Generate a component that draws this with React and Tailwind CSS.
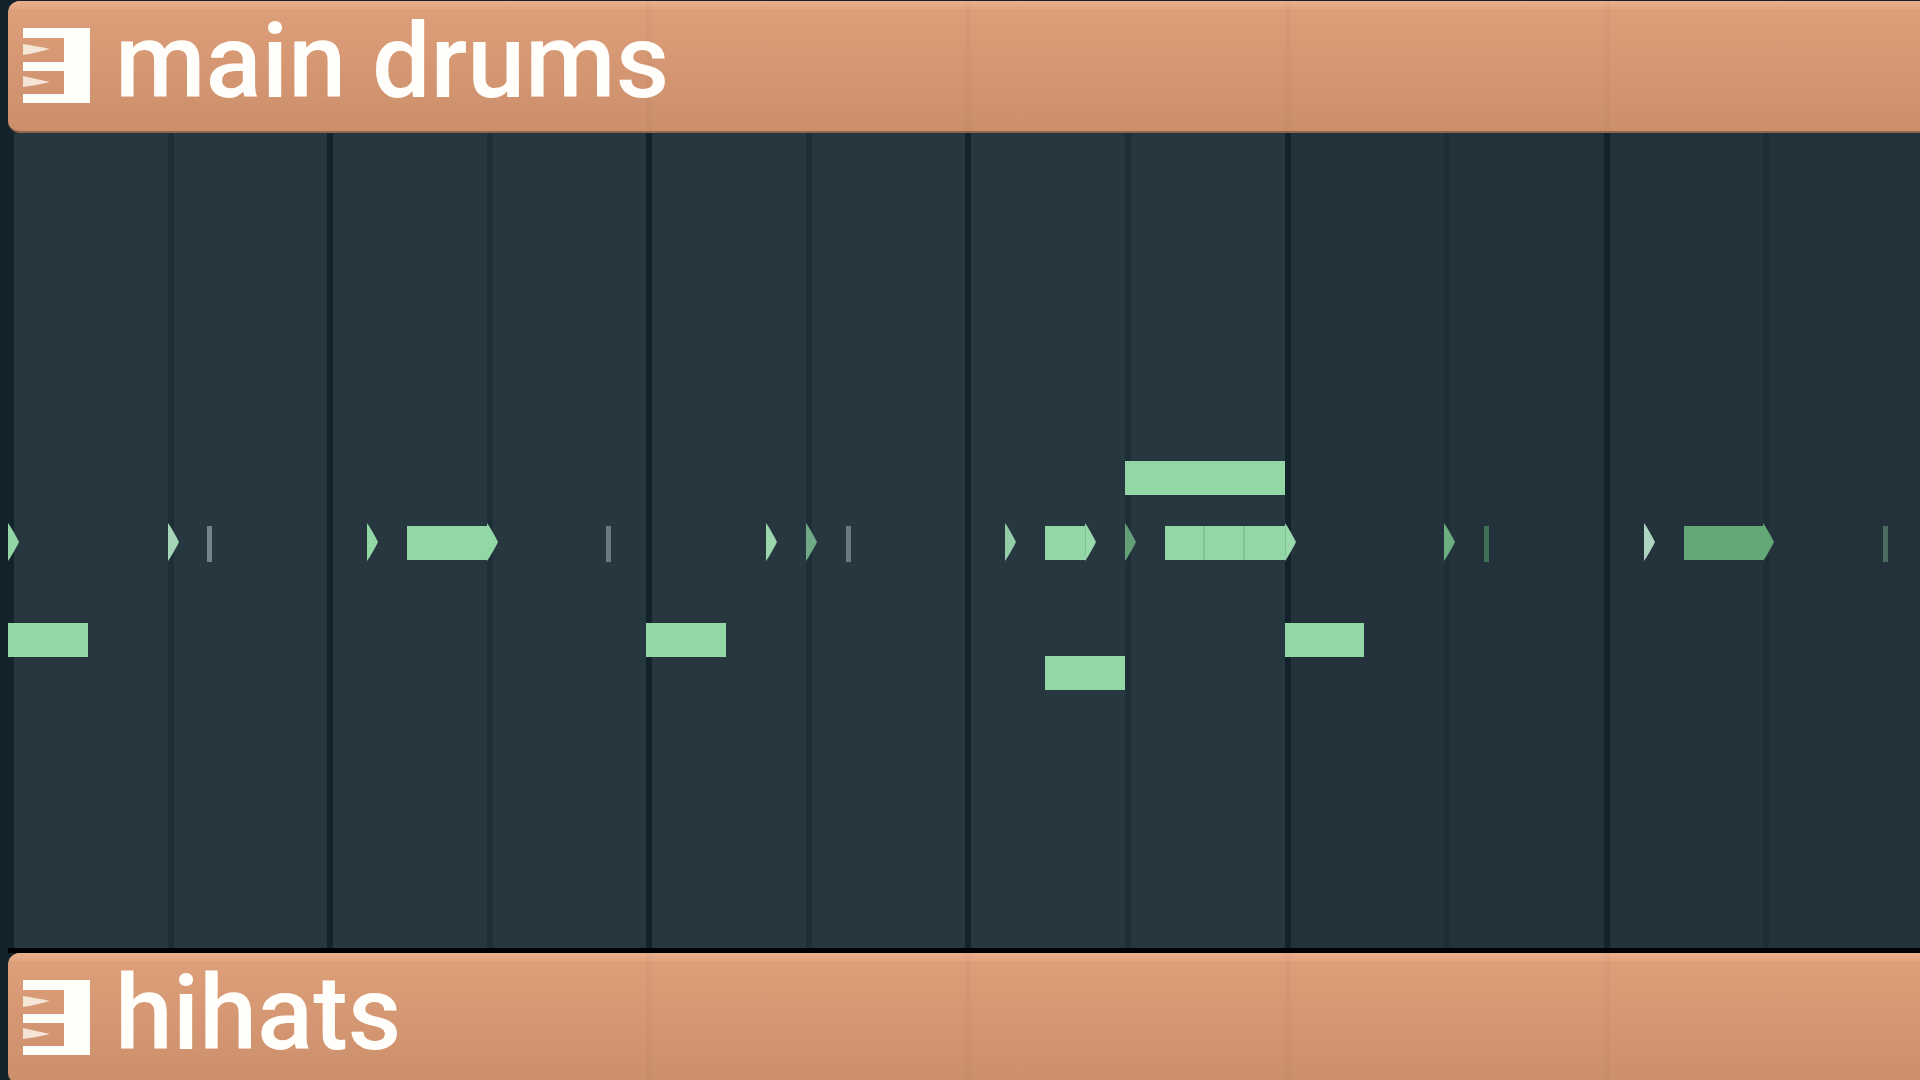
import React from 'react';

const BEATS = 12;

// start and length are in beats
const NOTES = [
  { lane: 'tom', start: 7, length: 1, color: 'bg-[#94d7a6]' },
  { lane: 'snare', start: 2.5, length: 0.5, color: 'bg-[#94d7a6]' },
  { lane: 'snare', start: 6.5, length: 0.25, color: 'bg-[#94d7a6]' },
  { lane: 'snare', start: 7.25, length: 0.25, color: 'bg-[#94d7a6]', seam: true },
  { lane: 'snare', start: 7.5, length: 0.25, color: 'bg-[#94d7a6]', seam: true },
  { lane: 'snare', start: 7.75, length: 0.25, color: 'bg-[#94d7a6]' },
  { lane: 'snare', start: 10.5, length: 0.5, color: 'bg-[#65a878]' },
  { lane: 'kick', start: 0, length: 0.5, color: 'bg-[#94d7a6]' },
  { lane: 'kick', start: 4, length: 0.5, color: 'bg-[#94d7a6]' },
  { lane: 'kick', start: 8, length: 0.5, color: 'bg-[#94d7a6]' },
  { lane: 'sub', start: 6.5, length: 0.5, color: 'bg-[#94d7a6]' },
];

const HITS = [
  { start: 0, color: 'text-[#94d7a6]' },
  { start: 1, color: 'text-[#a6d6b8]' },
  { start: 2.25, color: 'text-[#94d7a6]' },
  { start: 3, color: 'text-[#94d7a6]' },
  { start: 4.75, color: 'text-[#9cd8ae]' },
  { start: 5, color: 'text-[#6fa985]' },
  { start: 6.25, color: 'text-[#94cda7]' },
  { start: 6.75, color: 'text-[#9ad9ac]', seam: true },
  { start: 7, color: 'text-[#649f78]' },
  { start: 8, color: 'text-[#9ad9ac]', seam: true },
  { start: 9, color: 'text-[#6cae80]' },
  { start: 10.25, color: 'text-[#aed3c0]' },
  { start: 11, color: 'text-[#65a878]' },
];

const TICKS = [
  { start: 1.25, color: 'bg-[#72858a]' },
  { start: 3.75, color: 'bg-[#687b80]' },
  { start: 5.25, color: 'bg-[#687b80]' },
  { start: 9.25, color: 'bg-[#417057]' },
  { start: 11.75, color: 'bg-[#4c6c62]' },
];

const LANES = {
  tom: 'top-[328px]',
  snare: 'top-[393px]',
  kick: 'top-[490px]',
  sub: 'top-[523px]',
};

const pct = (beats) => `${(beats / BEATS) * 100}%`;

function PatternIcon() {
  return (
    <svg className="h-[76px] w-[68px] shrink-0" viewBox="0 0 68 76" fill="#fffdf8" aria-hidden="true">
      <path d="M0 0H67V75H0V66H41V43H0V34H41V10H0Z" />
      <path d="M0 16C8 17 18 19 27 21C18 23 8 26 0 27Z" fillOpacity="0.75" />
      <path d="M0 48C8 50 18 52 27 54C18 56 8 58 0 59Z" fillOpacity="0.75" />
    </svg>
  );
}

function ClipHeader({ name }) {
  return (
    <header className="relative h-[132px] overflow-hidden rounded-l-xl border-b-2 border-[#8f6650] bg-linear-to-b from-[#dea07b] to-[#cc8f6b]">
      <div className="absolute inset-x-0 top-0 h-2 bg-linear-to-b from-[#eaae8b] to-[#e2a580]" />
      <div className="absolute inset-y-0 left-0 -right-[3px] grid grid-cols-12">
        {Array.from({ length: BEATS }, (_, i) => (
          <div key={i} className={i >= 4 && i % 2 === 0 ? 'border-l-[6px] border-black/2' : ''} />
        ))}
      </div>
      <div className="relative flex h-full items-center gap-6 pl-[15px]">
        <PatternIcon />
        <h2 className="pb-2 text-[104px] leading-none font-medium whitespace-nowrap text-[#fffefa]">{name}</h2>
      </div>
    </header>
  );
}

function BeatLines() {
  return (
    <div className="grid h-full grid-cols-12">
      {Array.from({ length: BEATS }, (_, i) => (
        <div
          key={i}
          className={`border-l-[6px] ${i % 2 === 0 ? 'border-[#12232c]' : 'border-[#1d2e36]'} ${i < 8 ? 'bg-[#26373f]' : 'bg-[#24333b]'}`}
        />
      ))}
    </div>
  );
}

function NoteCanvas() {
  return (
    <div className="relative -mr-[3px] h-[815px]">
      <BeatLines />
      {NOTES.map((note, i) => (
        <div
          key={i}
          className={`absolute h-[34px] ${LANES[note.lane]} ${note.color} ${note.seam ? 'border-r-2 border-[#7cc491]' : ''}`}
          style={{ left: pct(note.start), width: pct(note.length) }}
        />
      ))}
      {HITS.map((hit, i) => (
        <svg
          key={i}
          className={`absolute top-[390px] h-[38px] w-[11px] ${hit.color}`}
          style={{ left: pct(hit.start) }}
          viewBox="0 0 11 38"
          fill="currentColor"
          aria-hidden="true"
        >
          <path d="M0 0C3 4 8 13 11 19C8 25 3 34 0 38Z" />
          {hit.seam && <path d="M0 4V34" stroke="#7cc491" strokeWidth="2" />}
        </svg>
      ))}
      {TICKS.map((tick) => (
        <div
          key={tick.start}
          className={`absolute top-[393px] h-9 w-[5px] ${tick.color}`}
          style={{ left: pct(tick.start) }}
        />
      ))}
    </div>
  );
}

export default function App() {
  return (
    <main className="h-screen overflow-hidden bg-[#14232b] pt-px pl-2 font-[Roboto,sans-serif]">
      <section className="border-b-[5px] border-black">
        <ClipHeader name="main drums" />
        <NoteCanvas />
      </section>
      <section>
        <ClipHeader name="hihats" />
      </section>
    </main>
  );
}
